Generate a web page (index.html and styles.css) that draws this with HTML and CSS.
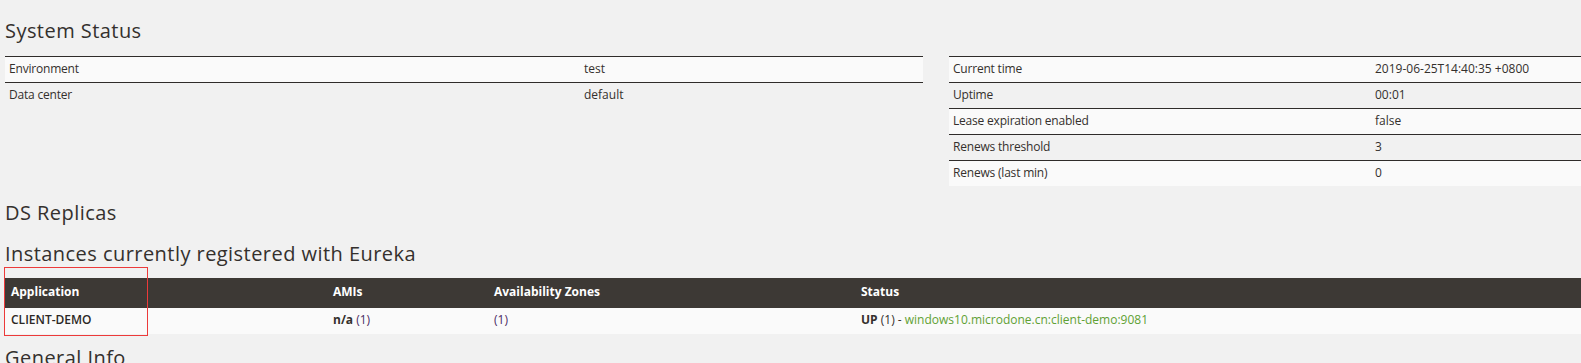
FILE: index.html
```html
<!DOCTYPE html>
<html lang="en">
<head>
  <meta charset="UTF-8">
  <title>Eureka</title>
  <link rel="stylesheet" href="styles.css">
</head>
<body>
  <div class="container">
    <h2>System Status</h2>
    <div class="status-row">
      <table class="info-table left">
        <tr class="odd"><td class="key">Environment</td><td>test</td></tr>
        <tr><td class="key">Data center</td><td>default</td></tr>
      </table>
      <table class="info-table right">
        <tr class="odd"><td class="key">Current time</td><td>2019-06-25T14:40:35 +0800</td></tr>
        <tr><td class="key">Uptime</td><td>00:01</td></tr>
        <tr class="odd"><td class="key">Lease expiration enabled</td><td>false</td></tr>
        <tr><td class="key">Renews threshold</td><td>3</td></tr>
        <tr class="odd"><td class="key">Renews (last min)</td><td>0</td></tr>
      </table>
    </div>

    <h2 class="replicas">DS Replicas</h2>
    <h2 class="instances">Instances currently registered with Eureka</h2>

    <div class="instances-wrap">
      <table class="instances-table">
        <thead>
          <tr>
            <th class="col-app">Application</th>
            <th class="col-ami">AMIs</th>
            <th class="col-zone">Availability Zones</th>
            <th>Status</th>
          </tr>
        </thead>
        <tbody>
          <tr>
            <td class="app-name">CLIENT-DEMO</td>
            <td><b>n/a</b> <a class="count" href="#">(1)</a></td>
            <td><a class="count" href="#">(1)</a></td>
            <td><b>UP</b> (1) - <a class="instance" href="#">windows10.microdone.cn:client-demo:9081</a></td>
          </tr>
        </tbody>
      </table>
      <div class="highlight"></div>
    </div>

    <h2 class="general">General Info</h2>
  </div>
</body>
</html>
```

FILE: styles.css
```css
body {
  margin: 0;
  background-color: #f1f1f1;
  color: #34302d;
  font-family: 'Open Sans', sans-serif;
  font-size: 12px;
  overflow: hidden;
}

.container {
  padding: 0 0 0 5px;
}

h2 {
  font-family: 'Open Sans', sans-serif;
  font-weight: 400;
  font-size: 20px;
  line-height: 24px;
  letter-spacing: 0.45px;
  color: #34302d;
  margin: 19px 0 13px;
}

.replicas {
  margin: 15px 0 0;
}

.instances {
  margin: 17px 0 12px;
}

.general {
  margin: 12px 0 0;
}

.status-row {
  display: grid;
  grid-template-columns: 918px 1fr;
  column-gap: 26px;
  align-items: start;
}

table {
  border-collapse: collapse;
  width: 100%;
}

.info-table {
  table-layout: fixed;
}

.info-table td {
  height: 22px;
  padding: 0 4px 3px;
  border-top: 1px solid #2f2c2a;
  vertical-align: middle;
}

.info-table .key {
  letter-spacing: -0.2px;
}

.info-table tr.odd {
  background-color: #fafafa;
}

.left .key {
  width: 567px;
}

.right .key {
  width: 414px;
}

.instances-wrap {
  position: relative;
}

.instances-table th {
  background-color: #3d3935;
  color: #fff;
  font-weight: 700;
  text-align: left;
  height: 26px;
  padding: 0 6px 4px;
}

.instances-table td {
  background-color: #fafafa;
  height: 23px;
  padding: 0 6px 3px;
}

.col-app {
  width: 310px;
}

.col-ami {
  width: 149px;
}

.col-zone {
  width: 355px;
}

.app-name {
  font-weight: 600;
  color: #2c2825;
}

a {
  text-decoration: none;
}

a.count {
  color: #4b2b63;
}

a.instance {
  color: #5fa134;
}

.highlight {
  position: absolute;
  left: -1px;
  top: -11px;
  width: 142px;
  height: 67px;
  border: 1px solid #ec3a3a;
}
```
